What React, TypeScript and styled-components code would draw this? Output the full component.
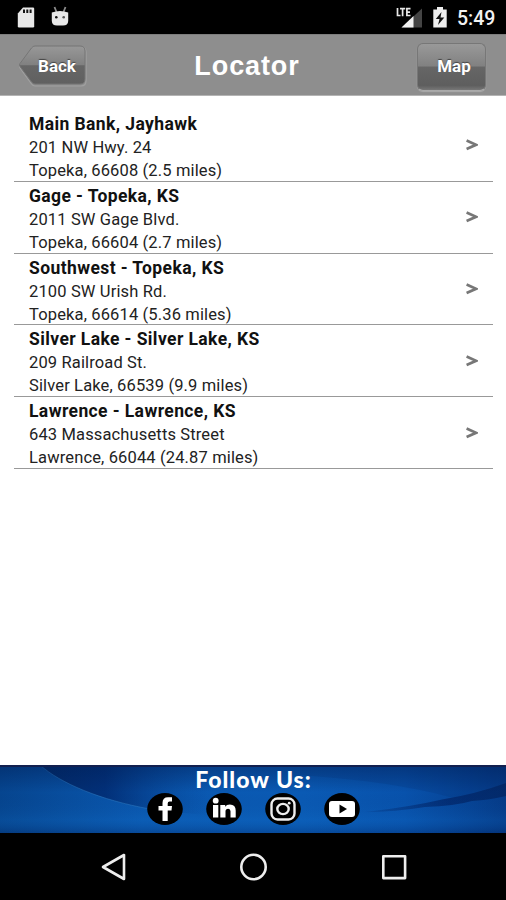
import React from "react";
import styled, { createGlobalStyle } from "styled-components";

const GlobalStyle = createGlobalStyle`
  * { box-sizing: border-box; }
  body { margin: 0; background: #fff; }
`;

const Screen = styled.div`
  width: 506px;
  height: 900px;
  display: flex;
  flex-direction: column;
  overflow: hidden;
  background: #fff;
  font-family: Roboto, sans-serif;
`;

const StatusBar = styled.div`
  height: 34px;
  flex: none;
  display: flex;
  align-items: center;
  justify-content: space-between;
  padding: 0 11px 0 17px;
  background: #000;
  color: #f2f2f2;
`;

const StatusGroup = styled.div<{ $gap: number }>`
  display: flex;
  align-items: center;
  gap: ${(p) => p.$gap}px;
`;

const Clock = styled.span`
  width: 38px;
  font-size: 19.5px;
  line-height: 32px;
  font-weight: 500;
  padding-top: 3px;
  white-space: nowrap;
`;

const Header = styled.header`
  height: 62px;
  flex: none;
  display: grid;
  grid-template-columns: 90px 1fr 90px;
  align-items: center;
  background: #8e8e8e;
  border-top: 1px solid #7d7d7d;
  border-bottom: 1px solid #b4b4b4;
`;

const Title = styled.h1`
  margin: 0;
  padding-top: 2px;
  text-align: center;
  color: #fff;
  font: 700 27px/32px "Liberation Sans", sans-serif;
  letter-spacing: 0.9px;
  text-indent: -12px;
`;

const BackButton = styled.button`
  position: relative;
  width: 70px;
  height: 42px;
  margin: 2px 0 0 18px;
  padding: 0;
  border: 0;
  background: none;
`;

const BackShape = styled.svg`
  position: absolute;
  inset: 0;
`;

const ButtonLabel = styled.span<{ $shift: number }>`
  position: relative;
  display: block;
  padding-left: ${(p) => p.$shift}px;
  color: #fff;
  font: 700 17px/40px Roboto, sans-serif;
  text-shadow: 0 -1px 1px #444;
`;

const MapButton = styled.button`
  width: 69px;
  height: 48px;
  margin: 3px 0 0 1px;
  padding: 0 0 1px;
  border: 1px solid #777;
  border-bottom-color: #aaa;
  border-radius: 6px;
  background: linear-gradient(#999 0%, #818181 48%, #666 50%, #5e5e5e 90%, #777 100%);
  box-shadow: 0 1px 1px #aaa;
`;

const Branches = styled.ul`
  flex: 1;
  margin: 0;
  padding: 14px 13px 0 14px;
  list-style: none;
`;

const Branch = styled.li`
  height: 71.8px;
  display: flex;
  align-items: center;
  justify-content: space-between;
  padding: 0 15px;
  border-bottom: 1px solid #999;
`;

const BranchText = styled.div`
  white-space: nowrap;
  padding-top: 3px;
`;

const BranchName = styled.div`
  color: #111;
  font-size: 17.5px;
  line-height: 24px;
  font-weight: 700;
  letter-spacing: 0.4px;
`;

const BranchLine = styled.div`
  color: #222;
  font-size: 16.5px;
  line-height: 23px;
  letter-spacing: 0.14px;
`;

const Footer = styled.footer`
  position: relative;
  height: 68px;
  flex: none;
  background: #07489a;
`;

const Backdrop = styled.svg`
  position: absolute;
  inset: 0;
`;

const FooterContent = styled.div`
  position: relative;
  display: flex;
  flex-direction: column;
  align-items: center;
`;

const FollowLabel = styled.div`
  height: 28px;
  padding-left: 1px;
  color: #fff;
  font: 900 23px/29px Lato, sans-serif;
  letter-spacing: 1px;
`;

const SocialRow = styled.div`
  display: flex;
  gap: 23px;
  padding-left: 1px;
`;

const NavBar = styled.nav`
  height: 67px;
  flex: none;
  display: flex;
  align-items: center;
  justify-content: center;
  gap: 112px;
  padding-left: 1px;
  background: #000;
`;

const branches = [
  { name: "Main Bank, Jayhawk", street: "201 NW Hwy. 24", city: "Topeka, 66608 (2.5 miles)" },
  { name: "Gage - Topeka, KS", street: "2011 SW Gage Blvd.", city: "Topeka, 66604 (2.7 miles)" },
  { name: "Southwest - Topeka, KS", street: "2100 SW Urish Rd.", city: "Topeka, 66614 (5.36 miles)" },
  { name: "Silver Lake - Silver Lake, KS", street: "209 Railroad St.", city: "Silver Lake, 66539 (9.9 miles)" },
  { name: "Lawrence - Lawrence, KS", street: "643 Massachusetts Street", city: "Lawrence, 66044 (24.87 miles)" },
];

const Chevron = () => (
  <svg width="12" height="14" viewBox="0 0 12 14">
    <path d="M.6 2.600 10 6.800 .6 11" fill="none" stroke="#777" strokeWidth="2.700" />
  </svg>
);

const FooterArt = () => (
  <Backdrop width="506" height="68" viewBox="0 0 506 68">
    <defs>
      <linearGradient id="base" x1="0" x2="1">
        <stop offset="0" stopColor="#06458f" />
        <stop offset=".28" stopColor="#0a58b0" />
        <stop offset=".6" stopColor="#0a5ab4" />
        <stop offset=".8" stopColor="#0852ac" />
        <stop offset="1" stopColor="#053b88" />
      </linearGradient>
      <linearGradient id="arc" x1="0" x2="1">
        <stop offset="0" stopColor="#022a68" />
        <stop offset=".25" stopColor="#023079" />
        <stop offset=".65" stopColor="#064594" stopOpacity="0" />
      </linearGradient>
      <linearGradient id="streak" x1="0" x2="1">
        <stop offset="0" stopColor="#022a70" stopOpacity=".2" />
        <stop offset=".6" stopColor="#022a70" stopOpacity=".9" />
        <stop offset="1" stopColor="#022663" stopOpacity=".8" />
      </linearGradient>
      <linearGradient id="shade" x1="0" y1="0" x2="0" y2="1">
        <stop offset="0" stopColor="#001c52" stopOpacity=".45" />
        <stop offset=".4" stopColor="#001c52" stopOpacity="0" />
        <stop offset=".8" stopColor="#1681dc" stopOpacity=".12" />
        <stop offset="1" stopColor="#001c52" stopOpacity=".25" />
      </linearGradient>
    </defs>
    <rect width="506" height="68" fill="url(#base)" />
    <path d="M40 0C60 18 100 35 150 44Q235 56 300 48V0Z" fill="url(#arc)" />
    <path d="M40 0C60 18 100 35 150 44" fill="none" stroke="#3b8bd0" strokeOpacity=".4" />
    <path d="M300 10Q390 16 450 32L472 36L506 21V0H300Z" fill="#052d70" opacity=".18" />
    <path d="M365 47Q410 42 442 34.500Q476 29 506 18V31Q490 35 472 36Q455 41 425 42Q395 47 365 47Z" fill="url(#streak)" />
    <rect width="506" height="68" fill="url(#shade)" />
    <rect width="506" height="2" fill="#12204f" />
  </Backdrop>
);

const Disc = ({ children }: { children: React.ReactNode }) => (
  <svg width="36" height="32" viewBox="0 0 36 32">
    <ellipse cx="18" cy="16" rx="17.8" ry="15.9" fill="#000" />
    {children}
  </svg>
);

export default function App() {
  return (
    <Screen>
      <GlobalStyle />
      <StatusBar>
        <StatusGroup $gap={16}>
          <svg width="18" height="21" viewBox="0 0 18 21">
            <path d="M6 .5H16Q17.2.5 17.2 1.7V19.3Q17.2 20.5 16 20.5H2Q.8 20.5.8 19.3V6.4Z" fill="#e8e8e8" />
            <path d="M7 2.5V6M10.3 2.5V6M13.6 2.5V6" stroke="#161616" strokeWidth="2" />
          </svg>
          <svg width="18" height="23" viewBox="0 0 18 23">
            <path d="M3.5 1 5.5 6M14.5 1 12.5 6" stroke="#8c8c8c" strokeWidth="1.8" />
            <path d="M.8 6.500Q9 3.500 17.2 6.500V15Q17 19.500 12 19.500H6Q1 19.500 .8 15Z" fill="#e8e8e8" />
            <circle cx="5.3" cy="11.2" r="1.3" fill="#111" />
            <circle cx="12.7" cy="11.2" r="1.3" fill="#555" />
          </svg>
        </StatusGroup>
        <StatusGroup $gap={10}>
          <svg width="27" height="21" viewBox="0 0 27 21">
            <path d="M26 1.500V20.500H5.500Z" fill="#444" />
            <path d="M17.500 9V20.500H5.500Z" fill="#f2f2f2" />
            <path d="M1.500 1V8.500H4.500M4 1.700H9.200M6.600 1.700V9.200M14.500 1.700H10.900V8.500H14.500M10.900 5.100H14" fill="none" stroke="#e8e8e8" strokeWidth="1.700" />
          </svg>
          <svg width="14" height="21" viewBox="0 0 14 21">
            <path d="M4 0H10V2.500H13.700V20.500H.3V2.500H4Z" fill="#eee" />
            <path d="M8.500 5 2.800 12H6.500L5 18 11.300 10.600H7.500Z" fill="#111" />
          </svg>
          <Clock>5:49</Clock>
        </StatusGroup>
      </StatusBar>
      <Header>
        <BackButton>
          <BackShape width="70" height="42" viewBox="0 0 70 42">
            <defs>
              <linearGradient id="back" x1="0" y1="0" x2="0" y2="1">
                <stop offset="0" stopColor="#989898" />
                <stop offset=".49" stopColor="#818181" />
                <stop offset=".52" stopColor="#666" />
                <stop offset="1" stopColor="#606060" />
              </linearGradient>
            </defs>
            <path d="M17 2H63Q68 2 68 7V36Q68 41 63 41H17Q15 41 13.500 39L2 23Q1 21.500 2 20L13.500 4Q15 2 17 2Z" fill="none" stroke="#a0a0a0" strokeWidth="1.2" />
            <path d="M17 1H62Q67 1 67 6V34Q67 39 62 39H17Q15 39 13.500 37L2 21.500Q1 20 2 18.500L13.500 3Q15 1 17 1Z" fill="url(#back)" stroke="#757575" />
          </BackShape>
          <ButtonLabel $shift={8}>Back</ButtonLabel>
        </BackButton>
        <Title>Locator</Title>
        <MapButton>
          <ButtonLabel $shift={5}>Map</ButtonLabel>
        </MapButton>
      </Header>
      <Branches>
        {branches.map((b) => (
          <Branch key={b.name}>
            <BranchText>
              <BranchName>{b.name}</BranchName>
              <BranchLine>{b.street}</BranchLine>
              <BranchLine>{b.city}</BranchLine>
            </BranchText>
            <Chevron />
          </Branch>
        ))}
      </Branches>
      <Footer>
        <FooterArt />
        <FooterContent>
          <FollowLabel>Follow Us:</FollowLabel>
          <SocialRow>
            <Disc>
              <path d="M15.500 28V17.500H11.500V13H15.500V10Q15.500 4.300 21 4.300H25V8.600H22.500Q20.700 8.600 20.700 10.500V13H25L24.500 17.500H20.700V28Z" fill="#fff" />
            </Disc>
            <Disc>
              <circle cx="9.700" cy="7.700" r="2.900" fill="#fff" />
              <path d="M7 12H12.300V24.500H7ZM14.300 12H19.200V13.700Q20.500 11.500 23.800 11.500 29.700 11.500 29.700 17.500V24.500H24.500V18.300Q24.500 15.800 22.200 15.800 19.500 15.800 19.500 18.300V24.500H14.300Z" fill="#fff" />
            </Disc>
            <Disc>
              <rect x="6.500" y="5.500" width="23" height="21" rx="6" fill="none" stroke="#eee" strokeWidth="2.400" />
              <ellipse cx="18" cy="16" rx="5.700" ry="5.100" fill="none" stroke="#eee" strokeWidth="2.400" />
              <circle cx="24.200" cy="10.200" r="1.400" fill="#eee" />
            </Disc>
            <Disc>
              <rect x="5" y="8" width="26" height="16" rx="3" fill="#fff" />
              <path d="M15.500 11.500V20.500L23 16Z" fill="#000" />
            </Disc>
          </SocialRow>
        </FooterContent>
      </Footer>
      <NavBar>
        <svg width="28" height="28" viewBox="0 0 28 28">
          <path d="M24 2V26L3 14Z" fill="none" stroke="#eee" strokeWidth="2.600" strokeLinejoin="round" />
        </svg>
        <svg width="28" height="28" viewBox="0 0 28 28">
          <circle cx="13.500" cy="14" r="12.200" fill="none" stroke="#eee" strokeWidth="2.600" />
        </svg>
        <svg width="28" height="28" viewBox="0 0 28 28">
          <rect x="3.300" y="3.300" width="21.800" height="21.800" fill="none" stroke="#eee" strokeWidth="2.600" strokeLinejoin="round" />
        </svg>
      </NavBar>
    </Screen>
  );
}
